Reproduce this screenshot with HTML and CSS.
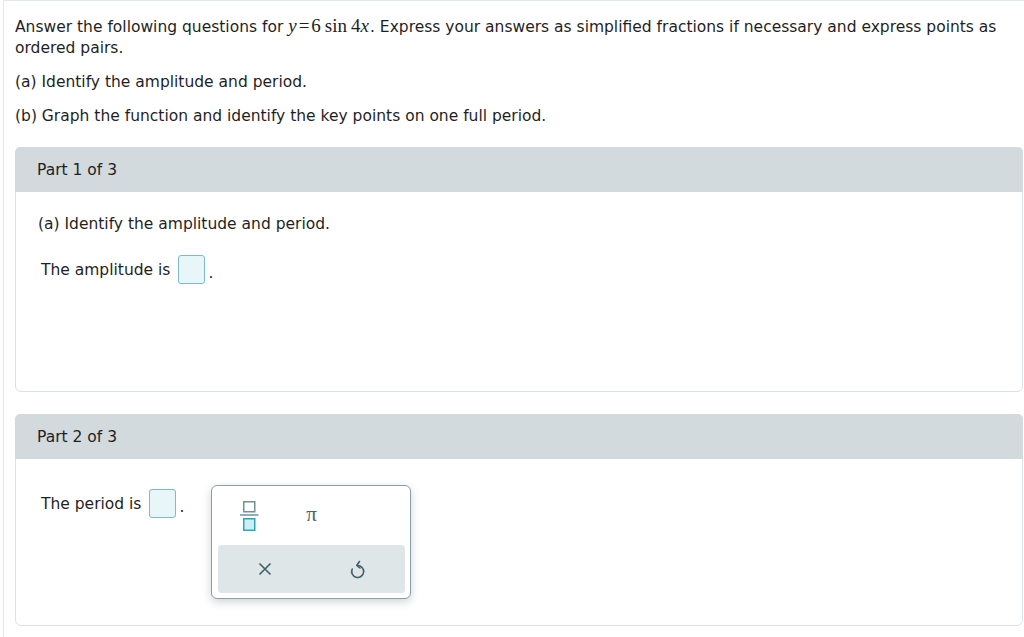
FILE: index.html
```html
<!DOCTYPE html>
<html>
<head>
<meta charset="utf-8">
<link rel="stylesheet" href="styles.css">
</head>
<body>
<div class="page">
  <div class="intro">
    <p>Answer the following questions for <span class="math"><i>y</i><span class="eq">=</span>6<span class="fn">sin</span>4<i>x</i></span>. Express your answers as simplified fractions if necessary and express points as ordered pairs.</p>
    <p>(a) Identify the amplitude and period.</p>
    <p>(b) Graph the function and identify the key points on one full period.</p>
  </div>

  <section class="card card-1">
    <div class="card-head">Part 1 of 3</div>
    <div class="card-body">
      <p class="lead">(a) Identify the amplitude and period.</p>
      <div class="answer-row">The amplitude is <span class="ans-box"></span><span class="dot">.</span></div>
    </div>
  </section>

  <section class="card card-2">
    <div class="card-head">Part 2 of 3</div>
    <div class="card-body">
      <div class="answer-row answer-row-2">The period is <span class="ans-box"></span><span class="dot">.</span>
        <div class="keypad">
          <div class="keys-top">
            <div class="key">
              <svg width="20" height="32" viewBox="0 0 20 32">
                <rect x="4.75" y="1.75" width="11" height="10" fill="none" stroke="#71909a" stroke-width="1.5"/>
                <line x1="1" y1="15" x2="19.5" y2="15" stroke="#71909a" stroke-width="1.5"/>
                <rect x="4.75" y="18.75" width="11" height="11.5" fill="#cdeef3" stroke="#2ea6b9" stroke-width="1.5"/>
              </svg>
            </div>
            <div class="key key-pi">π</div>
            <div class="key"></div>
          </div>
          <div class="keys-bottom">
            <div class="key">
              <svg width="14" height="14" viewBox="0 0 14 14">
                <path d="M1.5 1.5 L12.5 12.5 M12.5 1.5 L1.5 12.5" stroke="#3f5f69" stroke-width="1.6" fill="none"/>
              </svg>
            </div>
            <div class="key">
              <svg width="16" height="19" viewBox="0 0 16 19">
                <path d="M7.5 5.5 A6 6 0 1 1 2.2 9" stroke="#3f5f69" stroke-width="1.6" fill="none" stroke-linecap="round"/>
                <path d="M9.5 1.5 L6.8 5.3 L10 8" stroke="#3f5f69" stroke-width="1.6" fill="none" stroke-linecap="round" stroke-linejoin="round"/>
              </svg>
            </div>
          </div>
        </div>
      </div>
    </div>
  </section>
</div>
</body>
</html>
```

FILE: styles.css
```css
html, body {
  margin: 0;
  padding: 0;
  background: #ffffff;
  overflow: hidden;
}

body {
  font-family: "DejaVu Sans", Verdana, sans-serif;
  font-size: 15.5px;
  color: #1f1f1f;
}

.page {
  margin-left: 3px;
  border-left: 1px solid #e3e8ea;
  border-top: 1px solid #e3e8ea;
  padding: 16px 0 12px 11px;
  width: 1040px;
}

.intro p {
  margin: 0 0 13px 0;
  line-height: 21px;
  width: 985px;
}

.intro p:last-child {
  margin-bottom: 20px;
}

.math {
  font-family: "Liberation Serif", "Times New Roman", serif;
  font-size: 19px;
  line-height: 0;
}

.math i {
  font-style: italic;
  padding-right: 1px;
}

.math .eq {
  margin: 0 2px 0 1px;
}

.math .fn {
  margin: 0 4px 0 4px;
}

.card {
  width: 1008px;
  border: 1px solid #dae1e4;
  border-radius: 6px;
  box-sizing: border-box;
}

.card-head {
  background: #d2dadd;
  height: 44px;
  line-height: 44px;
  padding-left: 22px;
  border-radius: 5px 5px 0 0;
  margin: -1px -1px 0 -1px;
  padding-top: 1px;
}

.card-1 {
  height: 245px;
}

.card-2 {
  margin-top: 22px;
  height: 212px;
}

.card-body {
  padding: 22px 22px 0 22px;
}

.lead {
  margin: 0 0 19px 0;
  line-height: 21px;
}

.answer-row {
  display: flex;
  align-items: center;
  padding-left: 3px;
  height: 31px;
  position: relative;
}

.answer-row-2 {
  margin-top: 7px;
}

.ans-box {
  display: inline-block;
  width: 25px;
  height: 27px;
  margin-left: 8px;
  background: #e8f5f9;
  border: 1.5px solid #79bccb;
  border-radius: 3px;
}

.dot {
  margin-left: 3px;
  position: relative;
  top: 3px;
}

.keypad {
  position: absolute;
  left: 173px;
  top: -3px;
  width: 200px;
  height: 114px;
  box-sizing: border-box;
  border: 1px solid #8a9fa7;
  border-radius: 6px;
  background: #ffffff;
  box-shadow: 0 3px 8px rgba(40, 60, 70, 0.22);
  padding: 0 5px 5px 6px;
  display: flex;
  flex-direction: column;
}

.keys-top {
  display: grid;
  grid-template-columns: repeat(3, 1fr);
  height: 59px;
}

.keys-bottom {
  display: grid;
  grid-template-columns: 1fr 1fr;
  flex: 1;
  background: #dfe6e8;
  border-radius: 4px;
}

.key {
  display: flex;
  align-items: center;
  justify-content: center;
}

.key-pi {
  font-family: "Liberation Serif", "Times New Roman", serif;
  font-size: 21px;
  color: #47646d;
  padding-bottom: 3px;
}
```
